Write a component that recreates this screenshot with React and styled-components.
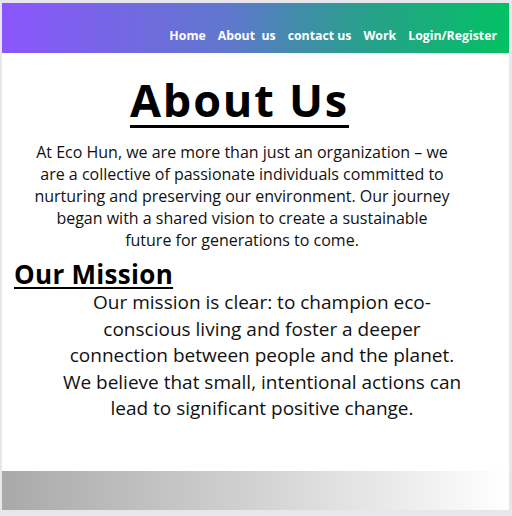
import React from 'react';
import styled, { createGlobalStyle } from 'styled-components';

const GlobalStyle = createGlobalStyle`
  html, body {
    margin: 0;
    padding: 0;
    background: #e6e6ec;
    font-family: "Open Sans", "Noto Sans", sans-serif;
  }
`;

const navLinks = ['Home', 'About  us', 'contact us', 'Work', 'Login/Register'];

const App = () => {
  return (
    <>
      <GlobalStyle />
      <Frame>
        <Header>
          <Nav>
            {navLinks.map(link => (
              <NavLink key={link}>{link}</NavLink>
            ))}
          </Nav>
        </Header>

        <Main>
          <Title>About Us</Title>
          <Intro>
            At Eco Hun, we are more than just an organization – we are a
            collective of passionate individuals committed to nurturing and
            preserving our environment. Our journey began with a shared vision
            to create a sustainable future for generations to come.
          </Intro>

          <SubTitle>Our Mission</SubTitle>
          <Mission>
            Our mission is clear: to champion eco-conscious living and foster a
            deeper connection between people and the planet. We believe that
            small, intentional actions can lead to significant positive change.
          </Mission>
        </Main>

        <Footer />
      </Frame>
    </>
  );
};

export default App;

const Frame = styled.div`
  display: flex;
  flex-direction: column;
  width: 507px;
  height: 507px;
  margin: 3px 0 0 2px;
  background: #fff;
`;

const Header = styled.header`
  height: 50px;
  display: flex;
  align-items: flex-end;
  justify-content: flex-end;
  padding: 0 12px 9px 0;
  box-sizing: border-box;
  background: linear-gradient(90deg, #8b55fd 0%, #5f78cc 45%, #2a9e8e 70%, #03c163 100%);
`;

const Nav = styled.nav`
  display: flex;
  gap: 12px;
`;

const NavLink = styled.a`
  color: #fff;
  font-size: 12.3px;
  font-weight: 700;
  white-space: pre;
  line-height: 16px;
`;

const Main = styled.main`
  flex: 1;
  display: flex;
  flex-direction: column;
`;

const Title = styled.h1`
  margin: 22px 32px 0 0;
  align-self: center;
  font-size: 45px;
  line-height: 50px;
  font-weight: 700;
  letter-spacing: 1.8px;
  color: #000;
  text-decoration: underline;
  text-decoration-thickness: 3px;
  text-underline-offset: 8px;
`;

const Intro = styled.p`
  margin: 16px 0 0 31px;
  width: 418px;
  text-align: center;
  font-family: "Open Sans", "Noto Sans", sans-serif;
  font-size: 16px;
  line-height: 22px;
  color: #111;
`;

const SubTitle = styled.h2`
  margin: 8px 0 0 12px;
  font-size: 26px;
  line-height: 30px;
  font-weight: 700;
  letter-spacing: 0.3px;
  color: #000;
  text-decoration: underline;
  text-decoration-thickness: 2px;
  text-underline-offset: 3px;
`;

const Mission = styled.p`
  margin: 0 0 0 52px;
  width: 416px;
  text-align: center;
  font-family: "Open Sans", "Noto Sans", sans-serif;
  font-size: 19px;
  line-height: 26.5px;
  color: #111;
`;

const Footer = styled.footer`
  height: 39px;
  background: linear-gradient(90deg, #a9a9a9 0%, #d2d2d2 50%, #ffffff 100%);
`;
